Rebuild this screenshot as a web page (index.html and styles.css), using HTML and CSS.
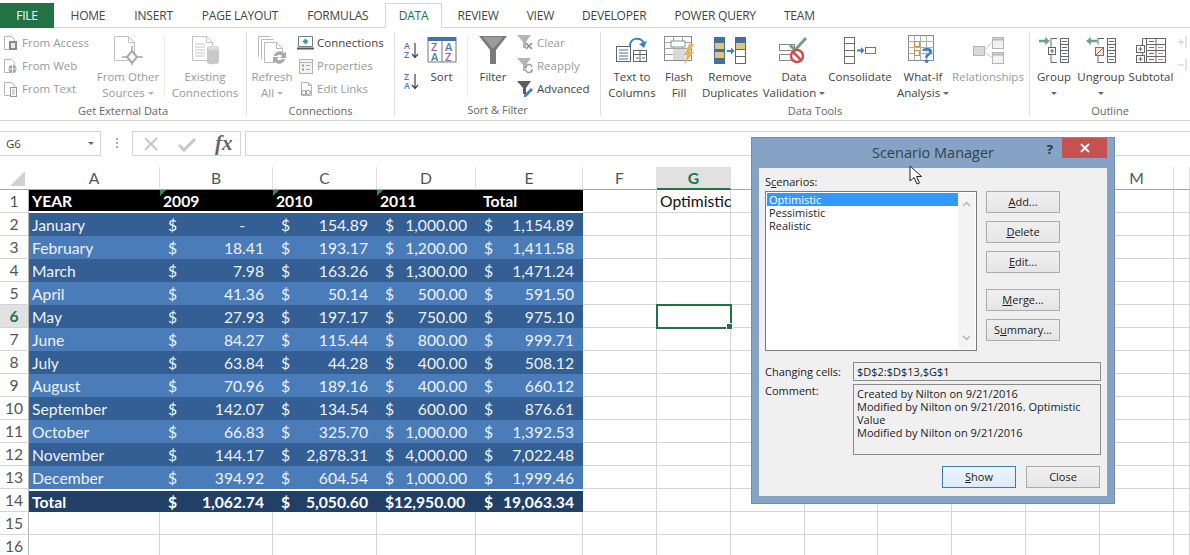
FILE: index.html
```html
<!DOCTYPE html>
<html lang="en">
<head>
<meta charset="UTF-8" />
<title>Scenario Manager</title>
<link rel="stylesheet" href="styles.css">
</head>
<body>
<div class="tabs">
	<div class="tab file">FILE</div>
	<div class="tab">HOME</div>
	<div class="tab">INSERT</div>
	<div class="tab">PAGE LAYOUT</div>
	<div class="tab">FORMULAS</div>
	<div class="tab active">DATA</div>
	<div class="tab">REVIEW</div>
	<div class="tab">VIEW</div>
	<div class="tab">DEVELOPER</div>
	<div class="tab">POWER QUERY</div>
	<div class="tab">TEAM</div>
</div>

<div class="ribbon">
	<div class="group g-external">
		<div class="group-body">
			<div class="small-stack w-93">
				<div class="small-btn off">
					<svg width="16" height="16" viewBox="0 0 16 16" fill="none"><path d="M1.500 1.500h7l3 3v10h-10z" stroke="#b5b5b5"/><rect x="6" y="6" width="8" height="9" fill="#8a8a8a"/><rect x="8" y="8" width="4" height="5" fill="#e8e8e8"/></svg>
					<span>From Access</span>
				</div>
				<div class="small-btn off">
					<svg width="16" height="16" viewBox="0 0 16 16" fill="none"><path d="M1.500 1.500h7l3 3v10h-10z" stroke="#b5b5b5"/><circle cx="9.500" cy="11" r="4" fill="#a5a5a5"/><path d="M5.500 11h8M9.500 7v8" stroke="#eee"/></svg>
					<span>From Web</span>
				</div>
				<div class="small-btn off">
					<svg width="16" height="16" viewBox="0 0 16 16" fill="none"><path d="M1.500 1.500h7l3 3v10h-10z" stroke="#b5b5b5"/><rect x="7.500" y="6.500" width="6" height="9" fill="#fff" stroke="#999"/><path d="M9 9h3M9 11h3M9 13h3" stroke="#aaa"/></svg>
					<span>From Text</span>
				</div>
			</div>
			<div class="big-btn off w-70">
				<div class="big-icon">
					<svg width="30" height="30" viewBox="0 0 30 30" fill="none"><path d="M1.500 1.500h14l6 6v18h-20z" stroke="#c2c2c2"/><path d="M15.500 1.500v6h6" stroke="#c2c2c2"/><path d="M19 16l5 6-5 6-5-6z" fill="#fff" stroke="#a8a8a8" stroke-width="2"/><path d="M19 11v5M19 28v2M9 22h5M24 22h6" stroke="#a8a8a8" stroke-width="1.500"/></svg>
				</div>
				<div class="big-label">From Other<br>Sources <i class="caret"></i></div>
			</div>
			<div class="inner-sep"></div>
			<div class="big-btn off w-78">
				<div class="big-icon">
					<svg width="28" height="30" viewBox="0 0 28 30" fill="none"><path d="M1.500 1.500h14l6 6v18h-20z" stroke="#c2c2c2"/><path d="M15.500 1.500v6h6" stroke="#c2c2c2"/><path d="M4 9h10M4 12h10M4 15h10M4 18h10M4 21h10" stroke="#c8c8c8"/><path d="M16 13c0-3 12-3 12 0v14c0 3-12 3-12 0z" fill="#c9c9c9"/><ellipse cx="22" cy="13" rx="6" ry="2" fill="#dedede"/></svg>
				</div>
				<div class="big-label">Existing<br>Connections</div>
			</div>
		</div>
		<div class="group-name">Get External Data</div>
	</div>

	<div class="group g-connections">
		<div class="group-body">
			<div class="big-btn off w-44">
				<div class="big-icon">
					<svg width="30" height="30" viewBox="0 0 30 30" fill="none"><path d="M1.500 1.500h12M1.500 1.500v20M4.500 4.500h12M4.500 4.500v20" stroke="#bbb"/><path d="M7.500 7.500h12l6 6v8M7.500 7.500v20h10" stroke="#bbb" fill="#fff"/><path d="M19.500 7.500v6h6" stroke="#bbb"/><path d="M17 21a6 6 0 0 1 10-3l2-1v6h-6l2-2a3 3 0 0 0-5 0zM28 24a6 6 0 0 1-10 3l-2 1v-6h6l-2 2a3 3 0 0 0 5 0z" fill="#a9a9a9"/></svg>
				</div>
				<div class="big-label">Refresh<br>All <i class="caret"></i></div>
			</div>
			<div class="small-stack stack-links">
				<div class="small-btn">
					<svg width="17" height="16" viewBox="0 0 17 16" fill="none"><path d="M1.500 1.500h14v10h-14z" fill="#fff" stroke="#6f7f8c"/><path d="M0 13.500h17" stroke="#4e5d6a" stroke-width="2"/><path d="M8.500 3.500l3 3-3 3-3-3z" fill="#3f9aa8"/></svg>
					<span>Connections</span>
				</div>
				<div class="small-btn off">
					<svg width="17" height="16" viewBox="0 0 17 16" fill="none"><rect x="2.500" y="1.500" width="13" height="14" fill="#f3f3f3" stroke="#b5b5b5"/><path d="M2.500 4.500h13" stroke="#b5b5b5"/><rect x="5" y="6.500" width="2" height="2" fill="#999"/><rect x="5" y="10.500" width="2" height="2" fill="#999"/><path d="M9 7.500h4M9 11.500h4" stroke="#aaa"/></svg>
					<span>Properties</span>
				</div>
				<div class="small-btn off">
					<svg width="17" height="16" viewBox="0 0 17 16" fill="none"><path d="M4.500 1.500h7l3 3v10h-10z" stroke="#b5b5b5"/><path d="M11.500 1.500v3h3" stroke="#b5b5b5"/><rect x="4.500" y="9.500" width="5" height="4" rx="2" stroke="#8f8f8f"/><rect x="8.500" y="9.500" width="5" height="4" rx="2" stroke="#8f8f8f"/></svg>
					<span>Edit Links</span>
				</div>
			</div>
		</div>
		<div class="group-name">Connections</div>
	</div>

	<div class="group g-sort">
		<div class="group-body">
			<div class="sort-arrows">
				<svg width="15" height="18" viewBox="0 0 15 18"><text x="0" y="8" class="svg-az purple">A</text><text x="0" y="17" class="svg-az blue">Z</text><path d="M11 2v14M8 13l3 3.500 3-3.500" fill="none" stroke="#444" stroke-width="1.200"/></svg>
				<svg width="15" height="18" viewBox="0 0 15 18"><text x="0" y="8" class="svg-az purple">Z</text><text x="0" y="17" class="svg-az blue">A</text><path d="M11 2v14M8 13l3 3.500 3-3.500" fill="none" stroke="#444" stroke-width="1.200"/></svg>
			</div>
			<div class="big-btn w-45">
				<div class="big-icon">
					<svg width="30" height="26" viewBox="0 0 30 26" fill="none"><rect x="1" y=".5" width="28" height="24.500" fill="#fff" stroke="#777"/><rect x="1" y="0" width="28" height="4" fill="#4472a8"/><path d="M15 4v21" stroke="#777"/><text x="4" y="14" class="svg-sort purple">Z</text><text x="4" y="24" class="svg-sort blue">A</text><text x="18" y="14" class="svg-sort blue">A</text><text x="18" y="24" class="svg-sort purple">Z</text></svg>
				</div>
				<div class="big-label">Sort</div>
			</div>
			<div class="inner-sep sep-sort"></div>
			<div class="big-btn w-48">
				<div class="big-icon">
					<svg width="28" height="28" viewBox="0 0 28 28"><path d="M0 0h28l-11 14v14h-6v-14z" fill="#7a7a7a"/><path d="M4 1h20l-9 11h-2z" fill="#9c9c9c"/></svg>
				</div>
				<div class="big-label">Filter</div>
			</div>
			<div class="small-stack">
				<div class="small-btn off">
					<svg width="17" height="17" viewBox="0 0 17 17"><path d="M0 1h14l-5 7v6h-3v-6z" fill="#b5b5b5"/><path d="M9 9l6 6M15 9l-6 6" stroke="#8f8f8f" stroke-width="1.600"/></svg>
					<span>Clear</span>
				</div>
				<div class="small-btn off">
					<svg width="17" height="17" viewBox="0 0 17 17" fill="none"><path d="M0 1h14l-5 7v6h-3v-6z" fill="#b5b5b5"/><path d="M9 11a3 3 0 0 1 6-1M15 12a3 3 0 0 1-6 1" stroke="#9a9a9a" stroke-width="1.400"/></svg>
					<span>Reapply</span>
				</div>
				<div class="small-btn">
					<svg width="17" height="17" viewBox="0 0 17 17" fill="none"><path d="M0 1h14l-5 7v6h-3v-6z" fill="#5c5c5c"/><path d="M7 15l7-7 2 2-7 7H7z" fill="#3f7fbf"/></svg>
					<span>Advanced</span>
				</div>
			</div>
		</div>
		<div class="group-name">Sort &amp; Filter</div>
	</div>

	<div class="group g-tools">
		<div class="group-body">
			<div class="big-btn w-52">
				<div class="big-icon">
					<svg width="32" height="26" viewBox="0 0 32 26" fill="none"><path d="M14 9c0-8 10-10 14-3" stroke="#3f7fbf" stroke-width="2"/><path d="M31 4l-3 7-5-4z" fill="#3f7fbf"/><rect x=".5" y="9.500" width="14" height="15" fill="#fff" stroke="#5c6770"/><path d="M3 13h9M3 16h9M3 19h9M3 22h9" stroke="#4472a8"/><rect x="17.500" y="13.500" width="13" height="11" fill="#fff" stroke="#5c6770"/><path d="M17.500 17.500h13M24 13.500v11M20 21h3M26 21h3" stroke="#5c6770"/></svg>
				</div>
				<div class="big-label">Text to<br>Columns</div>
			</div>
			<div class="big-btn w-42">
				<div class="big-icon">
					<svg width="31" height="29" viewBox="0 0 31 29" fill="none"><rect x=".5" y=".5" width="27" height="24" fill="#fff" stroke="#8a8a8a"/><path d="M.5 6.500h27M.5 12.500h27M.5 18.500h27M9.500.5v24M18.500.5v24" stroke="#a5a5a5"/><rect x="7" y="5" width="14" height="6" fill="#fff" stroke="#6ea287"/><rect x="9" y="13" width="12" height="11" fill="#d9d9d9"/><path d="M25 8h5l-4 8h4l-10 13 3-10h-3z" fill="#e2b565"/></svg>
				</div>
				<div class="big-label">Flash<br>Fill</div>
			</div>
			<div class="big-btn w-60">
				<div class="big-icon">
					<svg width="32" height="27" viewBox="0 0 32 27" fill="none"><rect x="0" y="0" width="11" height="27" fill="#41719c"/><rect x="1" y="6" width="9" height="6" fill="#e9c27a"/><rect x="1" y="15" width="9" height="6" fill="#e9c27a"/><rect x="21" y="0" width="11" height="6" fill="#41719c"/><rect x="21" y="6" width="11" height="6" fill="#e9c27a"/><rect x="21.500" y=".5" width="10" height="26" stroke="#5c6770"/><path d="M21.500 12.500h10M21.500 19.500h10" stroke="#5c6770"/><path d="M13 14h5" stroke="#3f7fbf" stroke-width="2"/><path d="M17 10.500l3.500 3.500-3.500 3.500z" fill="#3f7fbf"/></svg>
				</div>
				<div class="big-label">Remove<br>Duplicates</div>
			</div>
			<div class="big-btn w-68">
				<div class="big-icon">
					<svg width="30" height="27" viewBox="0 0 30 27" fill="none"><rect x=".5" y="7.500" width="15" height="6" stroke="#8a8a8a"/><rect x=".5" y="17.500" width="12" height="6" stroke="#8a8a8a"/><path d="M11 8l5 5L27 1" stroke="#6ea287" stroke-width="3"/><circle cx="18" cy="19" r="6" fill="#fff" stroke="#c9524e" stroke-width="2.500"/><path d="M14 15l8 8" stroke="#c9524e" stroke-width="2.500"/></svg>
				</div>
				<div class="big-label">Data<br>Validation <i class="caret dark"></i></div>
			</div>
			<div class="big-btn w-64">
				<div class="big-icon">
					<svg width="32" height="27" viewBox="0 0 32 27" fill="none"><rect x=".5" y=".5" width="10" height="26" fill="#fff" stroke="#6f6f6f"/><path d="M.5 6.500h10M.5 13.500h10M.5 19.500h10" stroke="#6f6f6f"/><path d="M13 13.500h5" stroke="#3f7fbf" stroke-width="2"/><path d="M17 10l3.500 3.500-3.500 3.500z" fill="#3f7fbf"/><rect x="21.500" y="10.500" width="10" height="6" fill="#fff" stroke="#c9524e"/></svg>
				</div>
				<div class="big-label">Consolidate</div>
			</div>
			<div class="big-btn w-62">
				<div class="big-icon">
					<svg width="30" height="30" viewBox="0 0 30 30" fill="none"><rect x=".5" y=".5" width="25" height="25" stroke="#8a8a8a"/><path d="M.5 6.500h25M.5 12.500h25M.5 18.500h25M6.500.5v25M12.500.5v25M18.500.5v25" stroke="#b0b0b0"/><rect x="6.500" y="6.500" width="5" height="5" fill="#fff" stroke="#d08f3c"/><rect x="6.500" y="15.500" width="5" height="5" fill="#fff" stroke="#d08f3c"/><text x="14" y="28" class="svg-help">?</text></svg>
				</div>
				<div class="big-label">What-If<br>Analysis <i class="caret dark"></i></div>
			</div>
			<div class="big-btn off w-68">
				<div class="big-icon">
					<svg width="31" height="27" viewBox="0 0 31 27" fill="none"><rect x=".5" y="9.500" width="11" height="9" fill="#d9d9d9" stroke="#b5b5b5"/><rect x="19.500" y=".5" width="11" height="11" fill="#f2f2f2" stroke="#b5b5b5"/><rect x="19.500" y="15.500" width="11" height="11" fill="#f2f2f2" stroke="#b5b5b5"/><path d="M19.500 2.500h11M19.500 17.500h11" stroke="#b5b5b5" stroke-width="2"/><path d="M11.500 13l8-8M11.500 15l8 6" stroke="#c5c5c5"/></svg>
				</div>
				<div class="big-label">Relationships</div>
			</div>
		</div>
		<div class="group-name">Data Tools</div>
	</div>

	<div class="group g-outline">
		<div class="group-body">
			<div class="big-btn w-48">
				<div class="big-icon">
					<svg width="30" height="27" viewBox="0 0 30 27" fill="none"><path d="M0 4h7" stroke="#6ea287" stroke-width="2.500"/><path d="M6 0l5 4-5 4z" fill="#6ea287"/><path d="M18 1.500h-6v24h6M12 13h-2" stroke="#666"/><rect x="9.500" y="10.500" width="7" height="7" fill="#fff" stroke="#666"/><path d="M11 14h4M13 12v4" stroke="#666"/><rect x="21.500" y="1.500" width="8" height="24" stroke="#666"/><path d="M21.500 7.500h8M21.500 13.500h8M21.500 19.500h8" stroke="#666"/><path d="M23 4.500h5M23 10.500h5M23 16.500h5M23 22.500h5" stroke="#4472a8"/></svg>
				</div>
				<div class="big-label">Group<br><i class="caret dark"></i></div>
			</div>
			<div class="big-btn w-46">
				<div class="big-icon">
					<svg width="30" height="27" viewBox="0 0 30 27" fill="none"><path d="M4 4h7" stroke="#6ea287" stroke-width="2.500"/><path d="M5 0L0 4l5 4z" fill="#6ea287"/><path d="M18 1.500h-6v6M12 18v7.500h6" stroke="#666"/><rect x="9.500" y="10.500" width="8" height="8" fill="#f7e3d9" stroke="#b05a4a"/><path d="M10 18l7-7" stroke="#b05a4a"/><rect x="21.500" y="1.500" width="8" height="24" stroke="#666"/><path d="M21.500 7.500h8M21.500 13.500h8M21.500 19.500h8" stroke="#666"/><path d="M23 4.500h5M23 10.500h5M23 16.500h5M23 22.500h5" stroke="#4472a8"/></svg>
				</div>
				<div class="big-label">Ungroup<br><i class="caret dark"></i></div>
			</div>
			<div class="big-btn w-54">
				<div class="big-icon">
					<svg width="30" height="27" viewBox="0 0 30 27" fill="none"><path d="M10.500 1.500h-4v24h4" stroke="#666"/><rect x=".5" y="8.500" width="8" height="7" fill="#fff" stroke="#666"/><path d="M2.500 12h4M4.500 10v4" stroke="#666"/><rect x=".5" y="18.500" width="8" height="7" fill="#fff" stroke="#666"/><path d="M2.500 22h4M4.500 20v4" stroke="#666"/><rect x="10.500" y="1.500" width="19" height="24" stroke="#666"/><path d="M10.500 7.500h19M10.500 13.500h19M10.500 19.500h19M20 1.500v24" stroke="#666"/><path d="M13 4.500h5M13 10.500h5M13 16.500h5M13 22.500h5" stroke="#4472a8"/><path d="M22 10.500h5M22 16.500h5M22 22.500h5" stroke="#d08f3c"/></svg>
				</div>
				<div class="big-label">Subtotal</div>
			</div>
			<div class="detail-icons">
				<svg width="10" height="12" viewBox="0 0 10 12"><path d="M0 6h6M3 3v6M8 0v12" stroke="#c8c8c8" fill="none"/></svg>
				<svg width="10" height="12" viewBox="0 0 10 12"><path d="M0 6h6M8 0v12" stroke="#c8c8c8" fill="none"/></svg>
			</div>
		</div>
		<div class="group-name">Outline</div>
	</div>
</div>

<div class="formula-bar">
	<div class="name-box"><span>G6</span><i class="caret dark"></i></div>
	<div class="grip"></div>
	<div class="fx-box">
		<svg width="16" height="16" viewBox="0 0 16 16"><path d="M2 2l12 12M14 2L2 14" stroke="#c6c6c6" stroke-width="2" fill="none"/></svg>
		<svg width="20" height="16" viewBox="0 0 20 16"><path d="M2 9l5 5L18 3" stroke="#c6c6c6" stroke-width="3" fill="none"/></svg>
		<span class="fx">fx</span>
	</div>
	<div class="formula-input"></div>
</div>

<table class="sheet">
	<colgroup>
		<col class="c-head"><col class="c-a"><col class="c-b"><col class="c-c"><col class="c-d"><col class="c-e">
		<col class="c-std"><col class="c-std"><col class="c-std"><col class="c-i"><col class="c-std"><col class="c-std"><col class="c-std"><col class="c-std"><col class="c-n">
	</colgroup>
	<tr class="col-heads">
		<th class="corner"><i></i></th><th>A</th><th>B</th><th>C</th><th>D</th><th>E</th><th>F</th><th class="picked">G</th><th>H</th><th>I</th><th>J</th><th>K</th><th>L</th><th>M</th><th></th>
	</tr>
	<tr class="row-top">
		<th>1</th><td class="black">YEAR</td><td class="black flag">2009</td><td class="black flag">2010</td><td class="black flag">2011</td><td class="black total-head">Total</td><td></td><td>Optimistic</td><td></td><td></td><td></td><td></td><td></td><td></td><td></td>
	</tr>
	<tr>
		<th>2</th><td class="dark">January</td><td class="dark"><div class="money"><span>$</span><span class="nil">-</span></div></td><td class="dark"><div class="money"><span>$</span><span>154.89</span></div></td><td class="dark"><div class="money"><span>$</span><span>1,000.00</span></div></td><td class="dark"><div class="money"><span>$</span><span>1,154.89</span></div></td><td></td><td></td><td></td><td></td><td></td><td></td><td></td><td></td><td></td>
	</tr>
	<tr>
		<th>3</th><td class="light">February</td><td class="light"><div class="money"><span>$</span><span>18.41</span></div></td><td class="light"><div class="money"><span>$</span><span>193.17</span></div></td><td class="light"><div class="money"><span>$</span><span>1,200.00</span></div></td><td class="light"><div class="money"><span>$</span><span>1,411.58</span></div></td><td></td><td></td><td></td><td></td><td></td><td></td><td></td><td></td><td></td>
	</tr>
	<tr>
		<th>4</th><td class="dark">March</td><td class="dark"><div class="money"><span>$</span><span>7.98</span></div></td><td class="dark"><div class="money"><span>$</span><span>163.26</span></div></td><td class="dark"><div class="money"><span>$</span><span>1,300.00</span></div></td><td class="dark"><div class="money"><span>$</span><span>1,471.24</span></div></td><td></td><td></td><td></td><td></td><td></td><td></td><td></td><td></td><td></td>
	</tr>
	<tr>
		<th>5</th><td class="light">April</td><td class="light"><div class="money"><span>$</span><span>41.36</span></div></td><td class="light"><div class="money"><span>$</span><span>50.14</span></div></td><td class="light"><div class="money"><span>$</span><span>500.00</span></div></td><td class="light"><div class="money"><span>$</span><span>591.50</span></div></td><td></td><td></td><td></td><td></td><td></td><td></td><td></td><td></td><td></td>
	</tr>
	<tr>
		<th class="picked">6</th><td class="dark">May</td><td class="dark"><div class="money"><span>$</span><span>27.93</span></div></td><td class="dark"><div class="money"><span>$</span><span>197.17</span></div></td><td class="dark"><div class="money"><span>$</span><span>750.00</span></div></td><td class="dark"><div class="money"><span>$</span><span>975.10</span></div></td><td></td><td class="selected"></td><td></td><td></td><td></td><td></td><td></td><td></td><td></td>
	</tr>
	<tr>
		<th>7</th><td class="light">June</td><td class="light"><div class="money"><span>$</span><span>84.27</span></div></td><td class="light"><div class="money"><span>$</span><span>115.44</span></div></td><td class="light"><div class="money"><span>$</span><span>800.00</span></div></td><td class="light"><div class="money"><span>$</span><span>999.71</span></div></td><td></td><td></td><td></td><td></td><td></td><td></td><td></td><td></td><td></td>
	</tr>
	<tr>
		<th>8</th><td class="dark">July</td><td class="dark"><div class="money"><span>$</span><span>63.84</span></div></td><td class="dark"><div class="money"><span>$</span><span>44.28</span></div></td><td class="dark"><div class="money"><span>$</span><span>400.00</span></div></td><td class="dark"><div class="money"><span>$</span><span>508.12</span></div></td><td></td><td></td><td></td><td></td><td></td><td></td><td></td><td></td><td></td>
	</tr>
	<tr>
		<th>9</th><td class="light">August</td><td class="light"><div class="money"><span>$</span><span>70.96</span></div></td><td class="light"><div class="money"><span>$</span><span>189.16</span></div></td><td class="light"><div class="money"><span>$</span><span>400.00</span></div></td><td class="light"><div class="money"><span>$</span><span>660.12</span></div></td><td></td><td></td><td></td><td></td><td></td><td></td><td></td><td></td><td></td>
	</tr>
	<tr>
		<th>10</th><td class="dark">September</td><td class="dark"><div class="money"><span>$</span><span>142.07</span></div></td><td class="dark"><div class="money"><span>$</span><span>134.54</span></div></td><td class="dark"><div class="money"><span>$</span><span>600.00</span></div></td><td class="dark"><div class="money"><span>$</span><span>876.61</span></div></td><td></td><td></td><td></td><td></td><td></td><td></td><td></td><td></td><td></td>
	</tr>
	<tr>
		<th>11</th><td class="light">October</td><td class="light"><div class="money"><span>$</span><span>66.83</span></div></td><td class="light"><div class="money"><span>$</span><span>325.70</span></div></td><td class="light"><div class="money"><span>$</span><span>1,000.00</span></div></td><td class="light"><div class="money"><span>$</span><span>1,392.53</span></div></td><td></td><td></td><td></td><td></td><td></td><td></td><td></td><td></td><td></td>
	</tr>
	<tr>
		<th>12</th><td class="dark">November</td><td class="dark"><div class="money"><span>$</span><span>144.17</span></div></td><td class="dark"><div class="money"><span>$</span><span>2,878.31</span></div></td><td class="dark"><div class="money"><span>$</span><span>4,000.00</span></div></td><td class="dark"><div class="money"><span>$</span><span>7,022.48</span></div></td><td></td><td></td><td></td><td></td><td></td><td></td><td></td><td></td><td></td>
	</tr>
	<tr>
		<th>13</th><td class="light">December</td><td class="light"><div class="money"><span>$</span><span>394.92</span></div></td><td class="light"><div class="money"><span>$</span><span>604.54</span></div></td><td class="light"><div class="money"><span>$</span><span>1,000.00</span></div></td><td class="light"><div class="money"><span>$</span><span>1,999.46</span></div></td><td></td><td></td><td></td><td></td><td></td><td></td><td></td><td></td><td></td>
	</tr>
	<tr class="row-total">
		<th>14</th><td class="total">Total</td><td class="total"><div class="money"><span>$</span><span>1,062.74</span></div></td><td class="total"><div class="money"><span>$</span><span>5,050.60</span></div></td><td class="total"><div class="money"><span>$12,950.00</span></div></td><td class="total"><div class="money"><span>$</span><span>19,063.34</span></div></td><td></td><td></td><td></td><td></td><td></td><td></td><td></td><td></td><td></td>
	</tr>
	<tr>
		<th>15</th><td></td><td></td><td></td><td></td><td></td><td></td><td></td><td></td><td></td><td></td><td></td><td></td><td></td><td></td>
	</tr>
	<tr>
		<th>16</th><td></td><td></td><td></td><td></td><td></td><td></td><td></td><td></td><td></td><td></td><td></td><td></td><td></td><td></td>
	</tr>
</table>

<div class="dialog">
	<div class="dialog-title">
		<span class="dialog-name">Scenario Manager</span>
		<span class="dialog-help">?</span>
		<div class="dialog-close"><svg width="10" height="10" viewBox="0 0 10 10"><path d="M1 1l8 8M9 1l-8 8" stroke="#fff" stroke-width="1.800" fill="none"/></svg></div>
	</div>
	<div class="dialog-panel">
		<div class="dlg-label">S<u>c</u>enarios:</div>
		<div class="scenario-row">
			<div class="listbox">
				<div class="list-items">
					<div class="list-item on">Optimistic</div>
					<div class="list-item">Pessimistic</div>
					<div class="list-item">Realistic</div>
				</div>
				<div class="list-scroll">
					<svg width="9" height="6" viewBox="0 0 9 6"><path d="M1 5l3.500-3.500L8 5" stroke="#b5b5b5" stroke-width="1.500" fill="none"/></svg>
					<svg width="9" height="6" viewBox="0 0 9 6"><path d="M1 1l3.500 3.500L8 1" stroke="#b5b5b5" stroke-width="1.500" fill="none"/></svg>
				</div>
			</div>
			<div class="dlg-buttons">
				<div class="dlg-btn"><u>A</u>dd...</div>
				<div class="dlg-btn"><u>D</u>elete</div>
				<div class="dlg-btn"><u>E</u>dit...</div>
				<div class="dlg-btn spaced"><u>M</u>erge...</div>
				<div class="dlg-btn">S<u>u</u>mmary...</div>
			</div>
		</div>
		<div class="field-row changing">
			<div class="field-label">Changing cells:</div>
			<div class="field">$D$2:$D$13,$G$1</div>
		</div>
		<div class="field-row">
			<div class="field-label label-top">Comment:</div>
			<div class="field comment">Created by Nilton on 9/21/2016<br>Modified by Nilton on 9/21/2016. Optimistic Value<br>Modified by Nilton on 9/21/2016</div>
		</div>
		<div class="dlg-footer">
			<div class="dlg-btn default"><u>S</u>how</div>
			<div class="dlg-btn">Close</div>
		</div>
	</div>
	<svg class="cursor" width="14" height="20" viewBox="0 0 14 20"><path d="M1 1v15l4-3.500 3 6.500 2.500-1-3-6.500h5z" fill="#fff" stroke="#222"/></svg>
</div>
</body>
</html>
```

FILE: styles.css
```css
html, body {
	height: 555px;
	overflow: hidden;
}
body {
	position: relative;
	margin: 0;
	background: white;
	font-family: "Open Sans", sans-serif;
	font-size: 11.5px;
	color: #444;
}
.ribbon svg {
	overflow: visible;
}

/* tabs */
.tabs {
	display: flex;
	height: 28px;
	padding-top: 3px;
	box-sizing: border-box;
	border-bottom: 1px solid #d4d4d4;
}
.tab {
	padding: 0 14.5px;
	line-height: 25px;
	font-size: 12px;
	letter-spacing: -0.2px;
	color: #444;
}
.tab.file {
	width: 54px;
	box-sizing: border-box;
	padding: 0;
	text-align: center;
	height: 25px;
	background: #217346;
	color: white;
}
.tab.file + .tab {
	margin-left: 2px;
}
.tab.active {
	height: 25px;
	width: 57px;
	box-sizing: border-box;
	margin: 0 1.5px 0 2px;
	padding: 0;
	text-align: center;
	background: white;
	border: 1px solid #d4d4d4;
	border-bottom: 1px solid white;
	color: #217346;
	line-height: 24px;
}
.tab.active ~ .tab {
	padding: 0 14px;
}

/* ribbon */
.ribbon {
	display: flex;
	height: 93px;
	box-sizing: border-box;
	border-bottom: 1px solid #d4d4d4;
}
.group {
	display: flex;
	flex-direction: column;
	box-sizing: border-box;
	flex: none;
	position: relative;
}
.g-external { width: 247px; }
.g-connections { width: 148px; }
.g-sort { width: 206px; }
.g-tools { width: 429px; }
.g-outline { width: 160px; }
.g-external, .g-connections, .g-sort, .g-tools {
	border-right: 1px solid #e1e1e1;
	margin-top: 4px;
	height: 84px;
}
.g-outline {
	margin-top: 4px;
	height: 84px;
}
.group-body {
	display: flex;
	height: 71px;
	margin-top: -1px;
}
.g-connections .group-body { padding-left: 3px; }
.g-sort .group-body { padding-left: 6px; }
.g-tools .group-body { padding-left: 5px; }
.group-name {
	text-align: center;
	font-size: 11px;
	line-height: 16px;
	margin-top: 2px;
	color: #666;
}
.small-stack {
	display: flex;
	flex-direction: column;
}
.w-93 { width: 93px; padding-left: 3px; box-sizing: border-box; }
.stack-links { margin-left: 3px; }
.small-btn {
	display: flex;
	align-items: center;
	gap: 3px;
	height: 23px;
	white-space: nowrap;
}
.small-btn svg { flex: none; }
.off { color: #9a9a9a; }
.big-btn {
	display: flex;
	flex-direction: column;
	align-items: center;
	flex: none;
}
.big-icon {
	display: flex;
	align-items: center;
	justify-content: center;
	height: 38px;
}
.big-label {
	text-align: center;
	line-height: 16px;
	white-space: nowrap;
}
.w-42 { width: 42px; }
.w-44 { width: 44px; }
.w-45 { width: 45px; }
.w-46 { width: 46px; }
.w-48 { width: 48px; }
.w-52 { width: 52px; }
.w-54 { width: 54px; }
.w-60 { width: 60px; }
.w-62 { width: 62px; }
.w-64 { width: 64px; }
.w-68 { width: 68px; }
.w-70 { width: 70px; }
.w-78 { width: 78px; }
.inner-sep {
	flex: none;
	width: 1px;
	height: 62px;
	margin: 4px 1px 0 1px;
	background: #e8e8e8;
}
.sep-sort { margin-left: 3px; }
.caret {
	display: inline-block;
	width: 0;
	height: 0;
	vertical-align: middle;
	border-left: 3px solid transparent;
	border-right: 3px solid transparent;
	border-top: 3px solid #b5b5b5;
}
.caret.dark { border-top-color: #666; }
.sort-arrows {
	display: flex;
	flex-direction: column;
	gap: 13px;
	width: 18px;
	box-sizing: border-box;
	padding: 10px 0 0 3px;
	flex: none;
}
.svg-az {
	font-family: "Open Sans", sans-serif;
	font-size: 9px;
	font-weight: 600;
}
.svg-sort {
	font-family: "Open Sans", sans-serif;
	font-size: 11px;
	font-weight: 600;
}
.svg-help {
	font-family: "Open Sans", sans-serif;
	font-size: 22px;
	font-weight: 700;
	fill: #3f7fbf;
}
.purple { fill: #8e5fa8; }
.blue { fill: #3f7fbf; }
.detail-icons {
	display: flex;
	flex-direction: column;
	gap: 11px;
	padding-top: 5px;
}

/* formula bar */
.formula-bar {
	display: flex;
	align-items: stretch;
	height: 25px;
	margin: 10px 0 11px 0;
}
.name-box {
	display: flex;
	align-items: center;
	justify-content: space-between;
	width: 101px;
	box-sizing: border-box;
	padding: 0 6px;
	border: 1px solid #d4d4d4;
	border-left: none;
	color: #444;
}
.grip {
	width: 2px;
	margin: 7px 14px 7px 15px;
	background-image: linear-gradient(#aaa 50%, transparent 50%);
	background-size: 2px 4px;
}
.fx-box {
	display: flex;
	align-items: center;
	gap: 18px;
	width: 109px;
	box-sizing: border-box;
	padding-left: 10px;
	border: 1px solid #d4d4d4;
}
.fx {
	font-family: "Liberation Serif", serif;
	font-style: italic;
	font-weight: bold;
	font-size: 21px;
	color: #666;
}
.formula-input {
	flex: 1;
	margin-left: 4px;
	border: 1px solid #d4d4d4;
	border-right: none;
}

/* sheet */
.sheet {
	table-layout: fixed;
	width: 1190px;
	border-collapse: separate;
	border-spacing: 0;
	font-family: Lato, sans-serif;
	font-size: 15.7px;
}
.c-head { width: 29px; }
.c-a { width: 131px; }
.c-b { width: 113px; }
.c-c { width: 104px; }
.c-d { width: 99px; }
.c-e { width: 107px; }
.c-std { width: 74px; }
.c-i { width: 73px; }
.c-n { width: 16px; }
.sheet tr { height: 23px; }
.sheet th {
	box-sizing: border-box;
	padding: 0;
	font-weight: normal;
	color: #555;
	border-right: 1px solid #b5b5b5;
	border-bottom: 1px solid #d4d4d4;
}
.col-heads th {
	border-right: 1px solid #e0e0e0;
	border-bottom: 1px solid #a5a5a5;
}
.col-heads th.corner {
	position: relative;
	border-right: none;
}
.corner i {
	position: absolute;
	right: 4px;
	bottom: 3px;
	width: 0;
	height: 0;
	border-left: 15px solid transparent;
	border-bottom: 15px solid #d0d0d0;
}
.sheet th.picked {
	background: #e1e1e1;
	color: #217346;
	font-weight: bold;
}
.col-heads th.picked { border-bottom: 2px solid #217346; }
.sheet td {
	box-sizing: border-box;
	padding: 0 3px;
	color: #111;
	white-space: nowrap;
	border-right: 1px solid #d4d4d4;
	border-bottom: 1px solid #d4d4d4;
	line-height: 20px;
}
.row-top { height: 24px; }
.sheet td.black {
	background: black;
	color: white;
	font-weight: bold;
	border-right: none;
	border-bottom: 2px solid white;
}
.sheet td.total-head { padding-left: 7px; }
.sheet td.dark, .sheet td.light, .sheet td.total {
	color: #eef2f7;
	border: none;
}
.sheet td.dark { background: #345f94; }
.sheet td.light { background: #4a7cb9; }
.row-total { height: 25px; }
.sheet td.total {
	background: #223f66;
	border-top: 2px solid white;
	color: white;
	font-weight: bold;
}
.flag { position: relative; }
.flag::before {
	content: "";
	position: absolute;
	left: 0;
	top: 0;
	border-top: 6px solid #2f8f4f;
	border-right: 6px solid transparent;
}
.money {
	display: flex;
	justify-content: space-between;
	padding: 0 6px 0 5px;
}
.nil { margin-right: 19px; }
.sheet td.selected {
	position: relative;
	outline: 2px solid #217346;
	outline-offset: -1px;
}
.selected::after {
	content: "";
	position: absolute;
	right: -3px;
	bottom: -3px;
	width: 5px;
	height: 5px;
	background: #217346;
	border: 1px solid white;
}

/* dialog */
.dialog {
	position: absolute;
	left: 751px;
	top: 137px;
	width: 364px;
	height: 367px;
	box-sizing: border-box;
	display: flex;
	flex-direction: column;
	padding: 0 7px 7px 7px;
	background: #85a3c4;
	border: 1px solid #6f8eb0;
	font-size: 11px;
	color: #222;
}
.dialog-title {
	position: relative;
	height: 30px;
	flex: none;
	text-align: center;
	line-height: 30px;
}
.dialog-name {
	font-size: 14.5px;
	color: #33414f;
}
.dialog-help {
	position: absolute;
	right: 54px;
	top: -4px;
	font-size: 13px;
	font-weight: bold;
	color: #263340;
}
.dialog-close {
	position: absolute;
	right: 0;
	top: 0;
	display: flex;
	align-items: center;
	justify-content: center;
	width: 45px;
	height: 20px;
	background: #c75050;
}
.dialog-panel {
	flex: 1;
	display: flex;
	flex-direction: column;
	padding: 0 6px;
	background: #f0f0f0;
}
.dlg-label {
	line-height: 13px;
	margin-top: 7px;
	margin-bottom: 3px;
}
.scenario-row {
	display: flex;
	gap: 9px;
}
.listbox {
	display: flex;
	width: 212px;
	height: 160px;
	box-sizing: border-box;
	padding: 1px;
	border: 1px solid #7a7a7a;
	background: white;
}
.list-items {
	flex: 1;
}
.list-item {
	line-height: 13px;
	padding-left: 2px;
}
.list-item.on {
	background: #3399ff;
	color: white;
}
.list-scroll {
	display: flex;
	flex-direction: column;
	justify-content: space-between;
	align-items: center;
	width: 17px;
	padding: 8px 0;
	box-sizing: border-box;
	background: #f4f4f4;
}
.dlg-buttons {
	display: flex;
	flex-direction: column;
	gap: 8px;
}
.dlg-btn {
	width: 74px;
	height: 22px;
	box-sizing: border-box;
	border: 1px solid #acacac;
	background: linear-gradient(#f0f0f0, #e5e5e5);
	text-align: center;
	line-height: 20px;
}
.dlg-btn.spaced { margin-top: 8px; }
.dlg-btn.default {
	border-color: #3c7fb1;
	background: linear-gradient(#ecf4fb, #dcebf7);
}
.field-row {
	display: flex;
	margin-top: 3px;
}
.field-row.changing { margin-top: 11px; }
.field-label {
	width: 88px;
	flex: none;
	line-height: 19px;
}
.field-label.label-top { line-height: 13px; }
.field {
	width: 248px;
	height: 19px;
	box-sizing: border-box;
	padding-left: 3px;
	border: 1px solid #8a8a8a;
	line-height: 17px;
}
.field.comment {
	height: 71px;
	line-height: 13px;
	padding-top: 2px;
	padding-right: 8px;
}
.dlg-footer {
	display: flex;
	justify-content: flex-end;
	gap: 10px;
	margin-top: 11px;
	margin-right: 1px;
}
.cursor {
	position: absolute;
	left: 157px;
	top: 27px;
}
```
